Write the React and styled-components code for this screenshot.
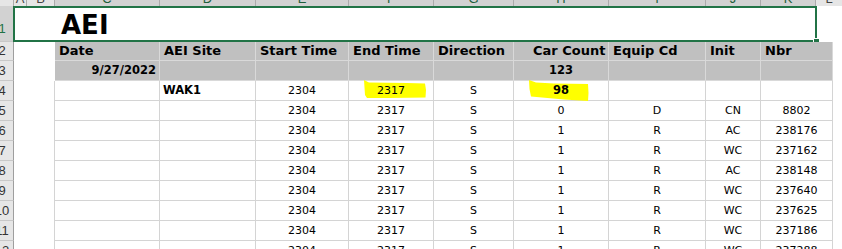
import React from "react";
import styled, { createGlobalStyle } from "styled-components";

const GlobalStyle = createGlobalStyle`
  html, body {
    margin: 0;
    padding: 0;
    background: #ffffff;
    overflow: hidden;
  }
  * {
    box-sizing: border-box;
  }
`;

const GREEN = "#217346";
const GRID = "#d4d4d4";
const BAND = "#c0c0c0";
const CELL_FONT = `"DejaVu Sans", "Liberation Sans", sans-serif`;
const HEAD_FONT = `"Liberation Sans", Arial, sans-serif`;

const Sheet = styled.div`
  width: 842px;
  height: 249px;
  overflow: hidden;
  display: flex;
  flex-direction: column;
  background: #ffffff;
`;

const ColHeadRow = styled.div`
  display: flex;
  height: 6px;
  flex-shrink: 0;
  background: #dcdcdc;
`;

const ColHead = styled.div`
  width: ${({ $w }) => $w}px;
  flex-shrink: 0;
  height: 6px;
  overflow: hidden;
  border-right: 1px solid #ababab;
  background: ${({ $sel }) => ($sel ? "#d2d2d2" : "#e6e6e6")};
  color: ${({ $sel }) => ($sel ? "#1e5f3b" : "#444444")};
  font-family: ${HEAD_FONT};
  font-size: 13px;
  text-align: center;
  ${({ $fill }) => ($fill ? "flex: 1; border-right: none;" : "")}
`;

const ColLetter = styled.span`
  display: block;
  margin-top: -8px;
  line-height: 14px;
`;

const Row = styled.div`
  display: flex;
  flex-shrink: 0;
  height: ${({ $h }) => $h}px;
`;

const RowHead = styled.div`
  width: 14px;
  flex-shrink: 0;
  overflow: hidden;
  display: flex;
  align-items: ${({ $bottom }) => ($bottom ? "flex-end" : "center")};
  padding-bottom: ${({ $bottom }) => ($bottom ? "5px" : "0")};
  background: ${({ $sel }) => ($sel ? "#d2d2d2" : "#e6e6e6")};
  border-right: 1px solid #9e9e9e;
  border-bottom: 1px solid #c8c8c8;
  color: ${({ $sel }) => ($sel ? GREEN : "#333333")};
  font-family: ${HEAD_FONT};
  font-size: 13px;
`;

const RowNum = styled.span`
  flex-shrink: 0;
  width: 22px;
  margin-left: -9px;
  text-align: center;
  line-height: 14px;
`;

const TitleBox = styled.div`
  position: relative;
  width: 804px;
  margin-left: -1px;
  flex-shrink: 0;
  height: 36px;
  border: 2px solid ${GREEN};
  background: #ffffff;
  display: flex;
  align-items: flex-end;
  padding-left: 46px;
  font-family: ${CELL_FONT};
  font-weight: bold;
  font-size: 26px;
  color: #000000;
  line-height: 30px;
`;

const FillHandle = styled.div`
  position: absolute;
  right: -5px;
  bottom: -5px;
  width: 7px;
  height: 7px;
  background: ${GREEN};
  border: 1px solid #ffffff;
`;

const Cell = styled.div`
  position: relative;
  width: ${({ $w }) => $w}px;
  flex-shrink: 0;
  display: flex;
  align-items: center;
  justify-content: ${({ $align }) =>
    $align === "right" ? "flex-end" : $align === "left" ? "flex-start" : "center"};
  padding: 0 ${({ $pr }) => $pr ?? 3}px 0 ${({ $pl }) => $pl ?? 3}px;
  background: ${({ $band }) => ($band ? BAND : "#ffffff")};
  border-right: ${({ $line }) => ($line ? `1px solid ${$line}` : "none")};
  border-bottom: ${({ $grid, $band }) =>
    $grid ? `1px solid ${$band ? "#d9d9d9" : GRID}` : "none"};
  font-family: ${CELL_FONT};
  font-size: ${({ $size }) => $size || 11}px;
  font-weight: ${({ $bold }) => ($bold ? "bold" : "normal")};
  color: #000000;
  white-space: nowrap;
  line-height: 1.2;
`;

const CellText = styled.span`
  position: relative;
  z-index: 1;
`;

const Marker = styled.svg`
  position: absolute;
  left: 0;
  top: 0;
  overflow: visible;
  z-index: 0;
`;

const Filler = styled.div`
  flex: 1;
  background: #ffffff;
`;

const headerCols = [
  { w: 14, l: "" },
  { w: 13, l: "A" },
  { w: 28, l: "B" },
  { w: 105, l: "C", sel: true },
  { w: 96, l: "D", sel: true },
  { w: 93, l: "E", sel: true },
  { w: 85, l: "F", sel: true },
  { w: 80, l: "G", sel: true },
  { w: 95, l: "H", sel: true },
  { w: 97, l: "I", sel: true },
  { w: 55, l: "J", sel: true },
  { w: 55, l: "K", sel: true },
];

// widths of sheet columns C..K in the body
const W = [105, 96, 93, 85, 80, 95, 97, 55, 72];

const headings = [
  "Date",
  "AEI Site",
  "Start Time",
  "End Time",
  "Direction",
  "Car Count",
  "Equip Cd",
  "Init",
  "Nbr",
];

const records = [
  ["0", "D", "CN", "8802"],
  ["1", "R", "AC", "238176"],
  ["1", "R", "WC", "237162"],
  ["1", "R", "AC", "238148"],
  ["1", "R", "WC", "237640"],
  ["1", "R", "WC", "237625"],
  ["1", "R", "WC", "237186"],
  ["1", "R", "WC", "237288"],
];

const Lead = ({ band }) => (
  <>
    <Cell $w={13} />
    <Cell $w={28} $line={band ? null : GRID} />
  </>
);

const BandCell = ({ w, children, ...rest }) => (
  <Cell $w={w} $band $grid $line="#d9d9d9" {...rest}>
    {children}
  </Cell>
);

const DataCell = ({ w, children, ...rest }) => (
  <Cell $w={w} $grid $line={GRID} {...rest}>
    <CellText>{children}</CellText>
  </Cell>
);

const App = () => {
  return (
    <>
      <GlobalStyle />
      <Sheet>
        <ColHeadRow>
          {headerCols.map((c, i) => (
            <ColHead key={i} $w={c.w} $sel={c.sel}>
              <ColLetter>{c.l}</ColLetter>
            </ColHead>
          ))}
          <ColHead $fill>
            <ColLetter>L</ColLetter>
          </ColHead>
        </ColHeadRow>

        <Row $h={36}>
          <RowHead $sel $bottom>
            <RowNum>1</RowNum>
          </RowHead>
          <TitleBox>
            AEI
            <FillHandle />
          </TitleBox>
          <Filler />
        </Row>

        <Row $h={19}>
          <RowHead>
            <RowNum>2</RowNum>
          </RowHead>
          <Lead band />
          {headings.map((h, i) => (
            <BandCell
              key={h}
              w={W[i]}
              $align="left"
              $pl={i === 5 ? 19 : 4}
              $bold
              $size={13}
              style={i === 5 ? { overflow: "visible", zIndex: 1 } : undefined}
            >
              {h}
            </BandCell>
          ))}
          <Filler />
        </Row>

        <Row $h={20}>
          <RowHead>
            <RowNum>3</RowNum>
          </RowHead>
          <Lead band />
          <BandCell w={W[0]} $align="right" $bold $size={11.5}>
            9/27/2022
          </BandCell>
          <BandCell w={W[1]} />
          <BandCell w={W[2]} />
          <BandCell w={W[3]} />
          <BandCell w={W[4]} />
          <BandCell w={W[5]} $bold $size={11.5}>
            123
          </BandCell>
          <BandCell w={W[6]} />
          <BandCell w={W[7]} />
          <BandCell w={W[8]} />
          <Filler />
        </Row>

        <Row $h={20}>
          <RowHead>
            <RowNum>4</RowNum>
          </RowHead>
          <Lead />
          <DataCell w={W[0]} />
          <DataCell w={W[1]} $align="left" $bold $size={11.5}>
            WAK1
          </DataCell>
          <DataCell w={W[2]}>2304</DataCell>
          <Cell $w={W[3]} $grid $line={GRID}>
            <Marker width="85" height="20">
              <path
                d="M15 -1 L20 1.5 L58 2 L76 2.5 L77 9 L76.5 16.5 L40 17 L18 17 L16 14 Z"
                fill="#ffff00"
              />
            </Marker>
            <CellText>2317</CellText>
          </Cell>
          <DataCell w={W[4]}>S</DataCell>
          <Cell $w={W[5]} $grid $line={GRID} $bold $size={11.5}>
            <Marker width="95" height="20">
              <path
                d="M15 -1 L22 1.5 L40 2.5 L74 3 L74.5 12 L74 20 L50 18.5 L17 15.5 L15.5 8 Z"
                fill="#ffff00"
              />
            </Marker>
            <CellText>98</CellText>
          </Cell>
          <DataCell w={W[6]} />
          <DataCell w={W[7]} />
          <DataCell w={W[8]} />
          <Filler />
        </Row>

        {records.map((r, i) => (
          <Row $h={20} key={i}>
            <RowHead>
              <RowNum>{i + 5}</RowNum>
            </RowHead>
            <Lead />
            <DataCell w={W[0]} />
            <DataCell w={W[1]} />
            <DataCell w={W[2]}>2304</DataCell>
            <DataCell w={W[3]}>2317</DataCell>
            <DataCell w={W[4]}>S</DataCell>
            <DataCell w={W[5]}>{r[0]}</DataCell>
            <DataCell w={W[6]}>{r[1]}</DataCell>
            <DataCell w={W[7]}>{r[2]}</DataCell>
            <DataCell w={W[8]}>{r[3]}</DataCell>
            <Filler />
          </Row>
        ))}
      </Sheet>
    </>
  );
};

export default App;
